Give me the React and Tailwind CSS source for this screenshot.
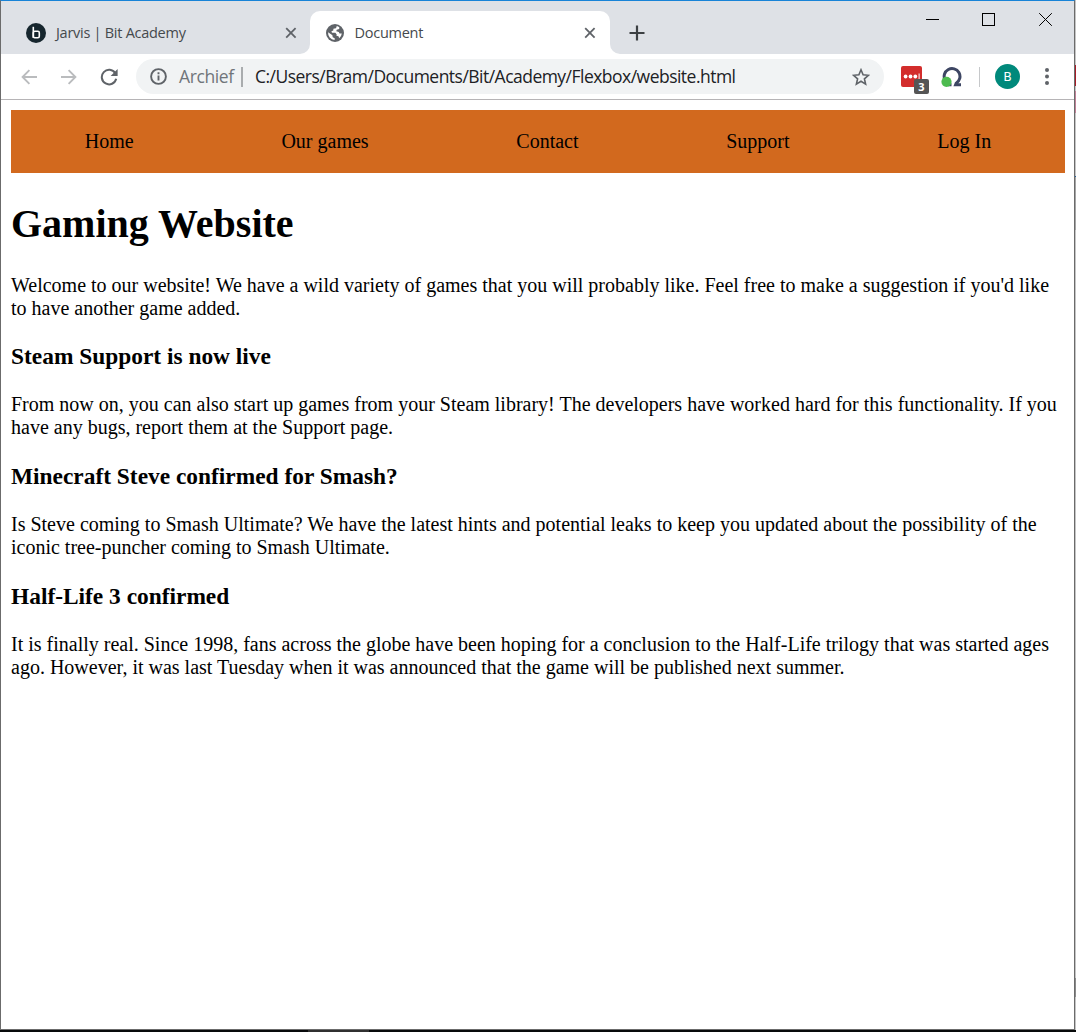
const CloseIcon = () => (
  <svg className="h-3 w-3 shrink-0" viewBox="0 0 12 12" fill="none" stroke="#5f6368" strokeWidth="1.8">
    <path d="M1.2 1.2l9.4 9.4M10.6 1.2L1.2 10.6" />
  </svg>
);

const TabStrip = () => (
  <header className="flex h-[53px] shrink-0 items-start bg-[#dee1e6] text-[14.5px] text-[#45494d]">
    <div className="mt-[11px] flex h-[42px] w-[309px] items-center pl-[25px] pr-[13px]">
      <svg className="h-5 w-5 shrink-0" viewBox="0 0 20 20" fill="none">
        <circle cx="10" cy="10" r="10" fill="#16262e" />
        <path d="M7.3 3.8v11.2" stroke="#fff" strokeWidth="1.6" />
        <rect x="7.3" y="8.3" width="6" height="6.4" rx="1.4" stroke="#fff" strokeWidth="1.6" />
      </svg>
      <span className="ml-[10px] flex-1 whitespace-nowrap tracking-[-0.27px]">Jarvis | Bit Academy</span>
      <CloseIcon />
    </div>
    <div className="relative mt-[10px] flex h-[43px] w-[300px] items-center rounded-t-[10px] bg-white pl-4 pr-[14px] pt-px">
      <svg className="absolute -left-[10px] bottom-0 h-[10px] w-[10px]" viewBox="0 0 10 10"><path d="M10 0v10H0A10 10 0 0 0 10 0z" fill="#fff" /></svg>
      <svg className="absolute -right-[10px] bottom-0 h-[10px] w-[10px]" viewBox="0 0 10 10"><path d="M0 0v10h10A10 10 0 0 1 0 0z" fill="#fff" /></svg>
      <svg className="h-[18px] w-[18px] shrink-0" viewBox="0 0 18 18">
        <circle cx="9" cy="9" r="9" fill="#5f6368" />
        <path d="M10.8 2.1L10 4.3 7.4 4.8 7.3 6.6 5.4 7.3 6 8.7 9.4 8.8 10.7 10.4 10.4 11.8 12.5 12.3 13.2 14.3A7 7 0 0 0 15.8 9.6L13.5 9.5 12.8 8 10.3 7.3 10.7 5.7 13.2 5.1 13.3 3.3A7 7 0 0 0 10.800 2.100zM2.100 8.300A7 7 0 0 0 8.600 16L8.700 14.200 6.700 13.200 6.400 11.200z" fill="#fff" />
      </svg>
      <span className="ml-[10.500px] flex-1 whitespace-nowrap tracking-[-0.27px]">Document</span>
      <CloseIcon />
    </div>
    <svg className="ml-[19px] mt-[24px] h-4 w-4" viewBox="0 0 16 16" stroke="#3c4043" strokeWidth="2.2"><path d="M.5 8h15M8 .5v15" /></svg>
    <div className="ml-auto mr-[22px] mt-[12px] flex items-center">
      <svg className="h-[13px] w-[13px]" viewBox="0 0 13 13"><path d="M0 6.5h13" stroke="#000" /></svg>
      <svg className="ml-[43px] h-[13px] w-[13px]" viewBox="0 0 13 13"><rect x=".5" y=".5" width="12" height="12" fill="none" stroke="#000" /></svg>
      <svg className="ml-[44px] h-[13px] w-[13px]" viewBox="0 0 13 13"><path d="M.2.2l12.6 12.6M12.8.2L.2 12.8" stroke="#000" /></svg>
    </div>
  </header>
);

const Toolbar = () => (
  <div className="flex h-[46px] shrink-0 items-center border-b border-[#b6b4b6] bg-white pl-[20px] pr-[25px]">
    <svg className="h-4 w-4" viewBox="0 0 16 16" fill="none" stroke="#babcbe" strokeWidth="1.9"><path d="M16 8H2M8.400 1.200L1.600 8l6.800 6.800" /></svg>
    <svg className="ml-6 h-4 w-4" viewBox="0 0 16 16" fill="none" stroke="#babcbe" strokeWidth="1.900"><path d="M0 8h14M7.600 1.200L14.400 8l-6.800 6.800" /></svg>
    <svg className="ml-[23px] h-[18px] w-[18px]" viewBox="0 0 18 18" fill="none"><path d="M15.300 5.200A7.300 7.300 0 1 0 16.200 10.800" stroke="#5f6368" strokeWidth="2" /><path d="M17.600 1v7h-7z" fill="#5f6368" /></svg>
    <div className="ml-[18px] flex h-[35px] w-[748px] items-center rounded-full bg-[#f1f3f4] pl-[14px] pr-[14px] text-[17.5px]">
      <svg className="h-[17px] w-[17px] shrink-0" viewBox="0 0 17 17" fill="none" stroke="#5f6368" strokeWidth="1.9"><circle cx="8.5" cy="8.5" r="7.4" /><path d="M8.5 7.6v5M8.5 4.3v1.9" /></svg>
      <span className="ml-3 w-[54px] whitespace-nowrap tracking-[-0.4px] text-[#70757a]">Archief</span>
      <span className="ml-[8px] h-5 w-[2px] bg-[#a9acae]" />
      <span className="ml-[12px] flex-1 whitespace-nowrap tracking-[-0.52px] text-[#202124]">C:/Users/Bram/Documents/Bit/Academy/Flexbox/website.html</span>
      <svg className="h-[18px] w-[18px] shrink-0" viewBox="0 0 18 18" fill="none" stroke="#5f6368" strokeWidth="1.6"><path d="M9 1.800l2.100 5 5.300.5-4 3.500 1.200 5.300L9 13.300l-4.600 2.800 1.200-5.300-4-3.500 5.300-.5z" /></svg>
    </div>
    <div className="relative ml-[17px] h-[21px] w-[21px] rounded-[2px] bg-[#d32d2c]">
      <svg className="h-[21px] w-[21px]" viewBox="0 0 21 21" fill="#fff"><circle cx="4.6" cy="10.5" r="1.9" /><circle cx="9.5" cy="10.5" r="1.9" /><circle cx="14.3" cy="10.5" r="1.9" /><path d="M17.600 7.500h1v6h-1z" /></svg>
      <span className="absolute left-[13px] top-[13px] flex h-[15px] w-[15px] items-center justify-center rounded-[2px] bg-[#555] text-[11px] font-bold leading-none text-white">3</span>
    </div>
    <svg className="ml-[19px] h-5 w-[21px]" viewBox="0 0 21 20" fill="none"><path d="M4 13A7.900 7.900 0 1 1 15.200 16.200L14.600 17.800H20M7 17.800h3.500" stroke="#3d4663" strokeWidth="3" /><circle cx="5.500" cy="14.800" r="5.100" fill="#4dbb4f" /></svg>
    <span className="ml-[17px] h-5 w-px bg-[#c6c8ca]" />
    <span className="ml-[15px] flex h-[25px] w-[25px] items-center justify-center rounded-full bg-[#00897b] font-['Roboto',sans-serif] text-[13px] text-white">B</span>
    <svg className="ml-auto h-[17px] w-1" viewBox="0 0 4 17" fill="#5f6368"><circle cx="2" cy="2" r="2" /><circle cx="2" cy="8.5" r="2" /><circle cx="2" cy="15" r="2" /></svg>
  </div>
);

const Article = ({ title, children }) => (
  <section className="mb-[24px]">
    <h3 className="text-[23.4px] font-bold leading-[27px]">{title}</h3>
    <p className="mt-[23px] leading-[23px]">{children}</p>
  </section>
);

export default function App() {
  return (
    <div className="flex h-[1032px] w-[1076px] flex-col overflow-hidden bg-white font-['Open_Sans',sans-serif]">
      <div className="flex h-[1030px] shrink-0">
        <div className="flex w-[1075px] flex-col border border-[#6b6b6b] border-t-[#1883d7]">
          <TabStrip />
          <Toolbar />
          <main className="flex-1 whitespace-nowrap pl-[10px] pr-[9px] pt-[10px] font-['Liberation_Serif',serif] text-[20px] leading-[23px] text-black">
            <nav className="flex h-[63px] w-[1054px] items-center justify-around bg-[#d2691e]">
              <a>Home</a>
              <a>Our games</a>
              <a>Contact</a>
              <a>Support</a>
              <a>Log In</a>
            </nav>
            <h1 className="mt-[28px] text-[40px] font-bold leading-[46px]">Gaming Website</h1>
            <p className="mb-[23px] mt-[27px]">
              <span>Welcome to our website! We have a wild variety of games that you will probably like. Feel free to make a suggestion if you'd like</span><br />
              <span>to have another game added.</span>
            </p>
            <Article title="Steam Support is now live">
              <span>From now on, you can also start up games from your Steam library! The developers have worked hard for this functionality. If you</span><br />
              <span>have any bugs, report them at the Support page.</span>
            </Article>
            <Article title="Minecraft Steve confirmed for Smash?">
              <span>Is Steve coming to Smash Ultimate? We have the latest hints and potential leaks to keep you updated about the possibility of the</span><br />
              <span>iconic tree-puncher coming to Smash Ultimate.</span>
            </Article>
            <Article title="Half-Life 3 confirmed">
              <span>It is finally real. Since 1998, fans across the globe have been hoping for a conclusion to the Half-Life trilogy that was started ages</span><br />
              <span>ago. However, it was last Tuesday when it was announced that the game will be published next summer.</span>
            </Article>
          </main>
        </div>
        <div className="flex w-px flex-col bg-[#c4c4c4]">
          <span className="mt-[65px] h-[21px] bg-[#a61c28]" />
          <span className="mt-[5px] h-[22px] bg-[#c08097]" />
          <span className="mt-[63px] h-px bg-[#1d5f9c]" />
          <span className="h-[53px] bg-[#a5a5a5]" />
          <span className="mt-[748px] h-[19px] bg-[#8b8b8b]" />
        </div>
      </div>
      <div className="h-[2px] shrink-0 bg-[#080a0b]"><div className="ml-[308px] h-full w-[61px] bg-[#303030]" /></div>
    </div>
  );
}
